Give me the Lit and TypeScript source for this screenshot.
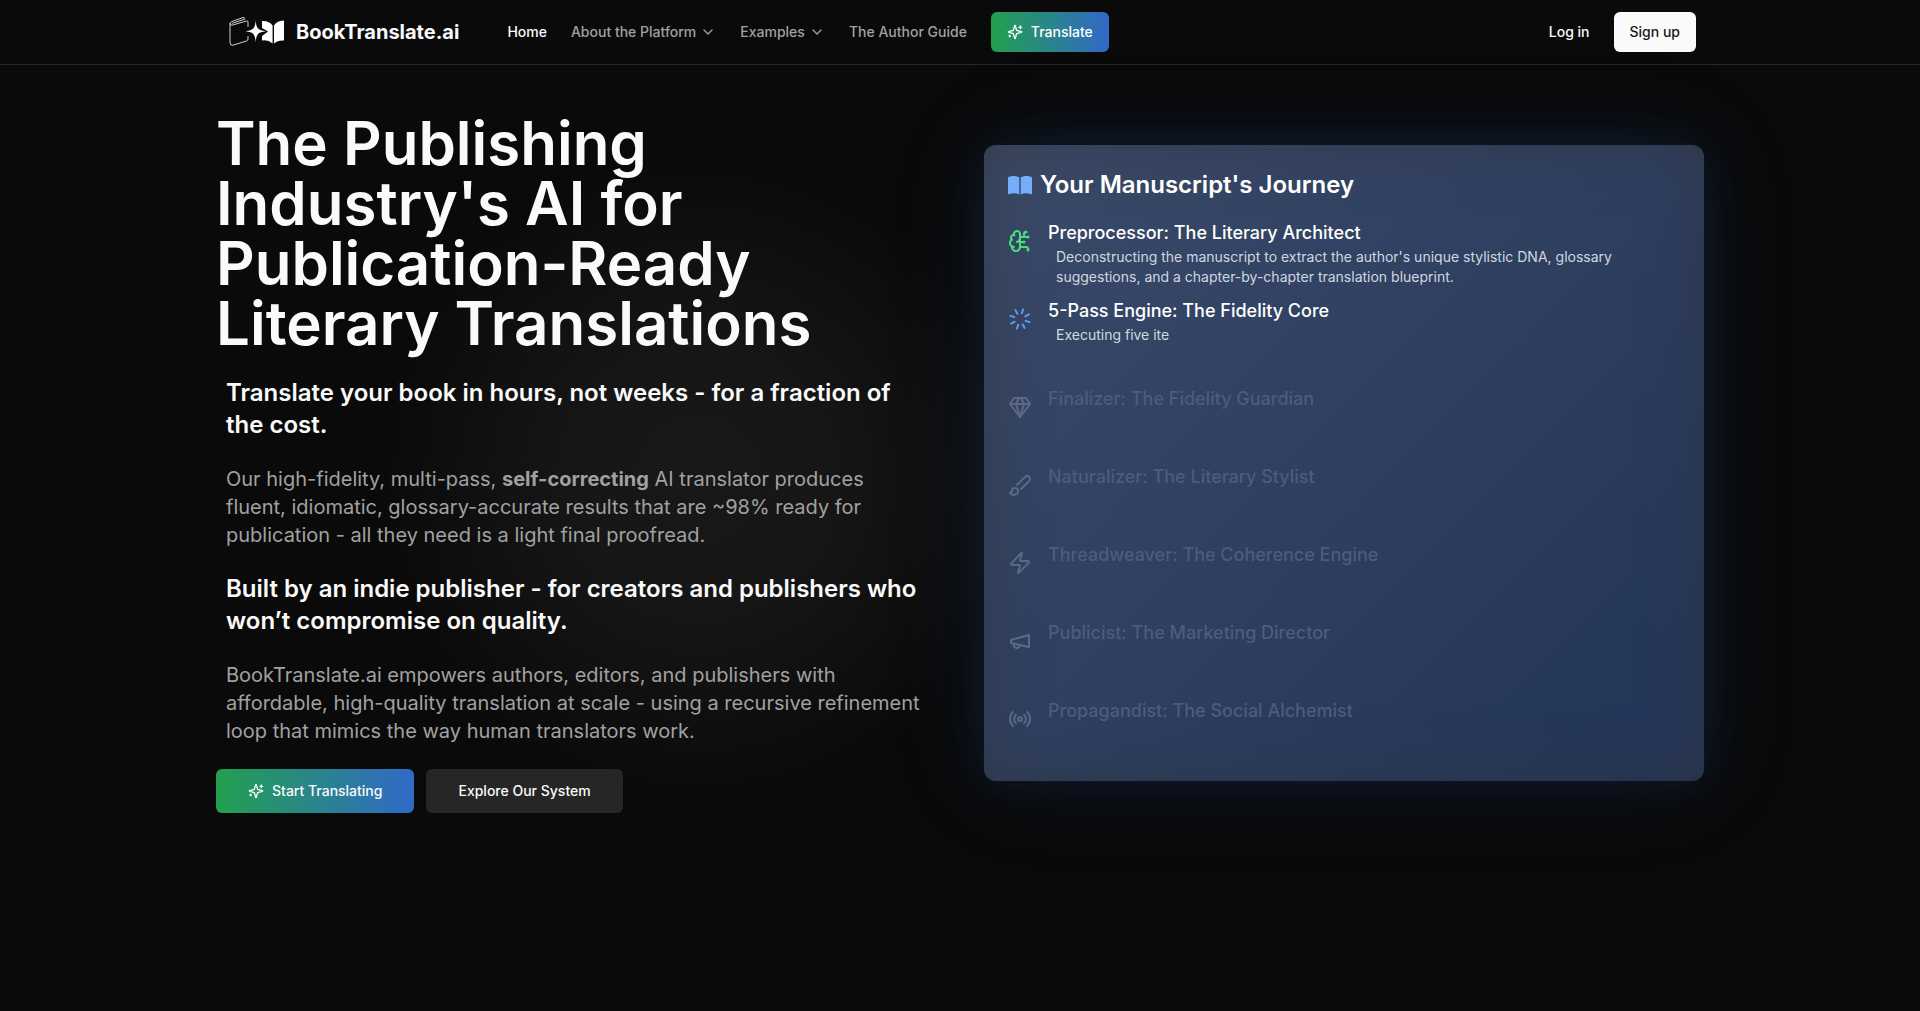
import { LitElement, html, css, svg, nothing } from "lit";
import { customElement, property } from "lit/decorators.js";
import { classMap } from "lit/directives/class-map.js";

const icons: Record<string, unknown> = {
  sparkles: svg`<path d="M9.937 15.5A2 2 0 0 0 8.5 14.063l-6.135-1.582a.5.5 0 0 1 0-.962L8.5 9.936A2 2 0 0 0 9.937 8.5l1.582-6.135a.5.5 0 0 1 .963 0L14.063 8.5A2 2 0 0 0 15.5 9.937l6.135 1.581a.5.5 0 0 1 0 .964L15.5 14.063a2 2 0 0 0-1.437 1.437l-1.582 6.135a.5.5 0 0 1-.963 0z"/><path d="M20 3v4M22 5h-4M4 17v2M5 18H3"/>`,
  chevron: svg`<path d="m6 9 6 6 6-6"/>`,
  brain: svg`<path d="M12 5a3 3 0 1 0-5.997.125 4 4 0 0 0-2.526 5.77 4 4 0 0 0 .556 6.588A4 4 0 1 0 12 18Z"/><path d="M9 13a4.5 4.5 0 0 0 3-4M6.003 5.125A3 3 0 0 0 6.401 6.5M3.477 10.896a4 4 0 0 1 .585-.396M6 18a4 4 0 0 1-1.967-.516M12 13h4M12 18h6a2 2 0 0 1 2 2v1M12 8h8M16 8V5a2 2 0 0 1 2-2"/><circle cx="16" cy="13" r=".5"/><circle cx="18" cy="3" r=".5"/><circle cx="20" cy="21" r=".5"/><circle cx="20" cy="8" r=".5"/>`,
  loader: svg`<g transform="rotate(18 12 12)"><path d="M12 2v4M12 18v4M2 12h4M18 12h4M4.93 4.93l2.83 2.83M16.24 16.24l2.83 2.83M4.93 19.07l2.83-2.83M16.24 7.76l2.83-2.83"/></g>`,
  gem: svg`<path d="M6 3h12l4 6-10 13L2 9Z"/><path d="M11 3 8 9l4 13 4-13-3-6"/><path d="M2 9h20"/>`,
  brush: svg`<path d="m9.06 11.9 8.07-8.06a2.85 2.85 0 1 1 4.03 4.03l-8.06 8.08"/><path d="M7.07 14.94c-1.66 0-3 1.35-3 3.02 0 1.33-2.5 1.52-2 2.02 1.08 1.1 2.49 2.02 4 2.02 2.2 0 4-1.8 4-4.04a3.01 3.01 0 0 0-3-3.02z"/>`,
  zap: svg`<path d="M4 14a1 1 0 0 1-.78-1.63l9.9-10.2a.5.5 0 0 1 .86.46l-1.92 6.02A1 1 0 0 0 13 10h7a1 1 0 0 1 .78 1.63l-9.9 10.2a.5.5 0 0 1-.86-.46l1.92-6.02A1 1 0 0 0 11 14z"/>`,
  megaphone: svg`<path d="m3 11 18-5v12L3 14v-3z"/><path d="M11.6 16.8a3 3 0 1 1-5.8-1.6"/>`,
  radio: svg`<path d="M4.9 19.1C1 15.2 1 8.8 4.9 4.9M7.8 16.2c-2.3-2.3-2.3-6.1 0-8.5M16.2 7.8c2.3 2.3 2.3 6.1 0 8.5M19.1 4.9C23 8.8 23 15.1 19.1 19"/><circle cx="12" cy="12" r="2"/>`,
};

@customElement("line-icon")
class LineIcon extends LitElement {
  @property() name = "";
  static styles = css`
    :host { display: block; flex: none; width: 16px; height: 16px; }
    svg { display: block; width: 100%; height: 100%; }
  `;
  render() {
    return html`<svg viewBox="0 0 24 24" fill="none" stroke="currentColor" stroke-width="2"
      stroke-linecap="round" stroke-linejoin="round" aria-hidden="true">${icons[this.name]}</svg>`;
  }
}

interface Step { icon: string; title: string; text?: string; state: "done" | "active" | "pending"; }

const steps: Step[] = [
  { icon: "brain", title: "Preprocessor: The Literary Architect", state: "done",
    text: "Deconstructing the manuscript to extract the author's unique stylistic DNA, glossary suggestions, and a chapter-by-chapter translation blueprint." },
  { icon: "loader", title: "5-Pass Engine: The Fidelity Core", state: "active", text: "Executing five ite" },
  { icon: "gem", title: "Finalizer: The Fidelity Guardian", state: "pending" },
  { icon: "brush", title: "Naturalizer: The Literary Stylist", state: "pending" },
  { icon: "zap", title: "Threadweaver: The Coherence Engine", state: "pending" },
  { icon: "megaphone", title: "Publicist: The Marketing Director", state: "pending" },
  { icon: "radio", title: "Propagandist: The Social Alchemist", state: "pending" },
];

@customElement("journey-card")
class JourneyCard extends LitElement {
  static styles = css`
    :host { display: block; }
    .card {
      padding: 24px; border-radius: 12px; color: #fff;
      background: linear-gradient(135deg, #3b4a69 0%, #2e3f60 50%, #223457 100%);
      box-shadow: 0 0 40px rgba(37, 78, 160, 0.16), 0 0 100px rgba(37, 78, 160, 0.16),
        inset 0 0 60px rgba(50, 54, 60, 0.65);
    }
    .title { display: flex; align-items: center; gap: 8px; margin: 0 0 20px; font-size: 24px; line-height: 32px; font-weight: 600; }
    .book { flex: none; width: 24px; height: 24px; fill: #74adfb; }
    .steps { display: flex; flex-direction: column; gap: 10px; margin: 0; padding: 0; list-style: none; }
    .step { display: flex; gap: 16px; min-height: 68px; }
    .active { min-height: 78px; }
    .step:last-child { min-height: 58px; }
    .glyph { width: 24px; height: 24px; margin-top: 8px; display: grid; place-items: center; flex: none; }
    .glyph line-icon { width: 24px; height: 24px; }
    .name { margin: 0; font-size: 18px; line-height: 24px; font-weight: 500; }
    .text { margin: 2px 0 0 8px; font-size: 14px; line-height: 20px; color: #d1d7e0; }
    .done .glyph { color: #4ade80; }
    .active .glyph { color: #5b9cf6; }
    .pending .glyph { color: #5b6985; }
    .pending .name { color: #4d5c7a; }
  `;
  render() {
    return html`<section class="card">
      <h2 class="title">
        <svg class="book" viewBox="0 0 24 24" aria-hidden="true"><path d="M11.3 4.5C9.7 3.5 7.9 3 6 3 4.200 3 2 3.300.600 4.100A1 1 0 0 0 0 5v15.500a.8.800 0 0 0 1.100.7C2.700 20.500 4.300 20.200 6 20.200c1.900 0 3.700.4 5.300 1.200zM12.700 4.500C14.300 3.500 16.100 3 18 3c1.800 0 4 .3 5.400 1.100.4.200.6.500.6.900v15.500a.8.800 0 0 1-1.100.7c-1.600-.7-3.200-1-4.900-1-1.900 0-3.700.4-5.300 1.200z"/></svg>
        Your Manuscript's Journey
      </h2>
      <ol class="steps">${steps.map((s) => html`
        <li class=${classMap({ step: true, [s.state]: true })}>
          <span class="glyph"><line-icon name=${s.icon}></line-icon></span>
          <div><h3 class="name">${s.title}</h3>${s.text ? html`<p class="text">${s.text}</p>` : nothing}</div>
        </li>`)}
      </ol>
    </section>`;
  }
}

@customElement("site-header")
class SiteHeader extends LitElement {
  static styles = css`
    :host { display: block; border-bottom: 1px solid #262626; }
    .bar { box-sizing: border-box; max-width: 1536px; margin: 0 auto; padding: 0 32px 0 36px; height: 64px; display: flex; align-items: center; font-size: 14px; line-height: 20px; font-weight: 500; }
    a { color: inherit; text-decoration: none; }
    .brand { display: flex; align-items: center; gap: 10px; margin-right: 48px; font-size: 20px; line-height: 28px; font-weight: 700; }
    .logo { width: 58px; height: 32px; }
    .nav { display: flex; align-items: center; gap: 24px; color: #a1a1a1; }
    .current { color: #fafafa; }
    button, .cta { font: inherit; border: 0; height: 40px; border-radius: 6px; display: flex; align-items: center; cursor: pointer; }
    .menu { gap: 4px; padding: 0; color: inherit; background: none; }
    .cta { box-sizing: border-box; gap: 8px; padding: 0 16px; color: #fff; background: linear-gradient(90deg, #22a04e, #3169c8); }
    .account { margin-left: auto; display: flex; align-items: center; gap: 24px; }
    .signup { padding: 0 16px; color: #171717; background: #fafafa; }
  `;
  render() {
    return html`<header class="bar">
      <a class="brand" href="#">
        <svg class="logo" viewBox="0 0 58 32" aria-hidden="true">
          <g fill="none" stroke="#e5e5e5" stroke-width="0.9" stroke-linejoin="round" stroke-linecap="round">
            <path d="M20 10.500V6Q20 4.600 18.500 5L4 9.200Q2 9.200 2 7.500V26.500Q2 29.800 5 29.200L18.500 25Q20 24.500 20 23V20.500"/>
            <path d="M2 7.500Q2 6.200 3.800 5.600L15 1.500Q16.400 1.200 16.600 2.300V3.200"/>
            <path d="M4.500 7.200L16 3.400"/>
          </g>
          <path fill="#fff" d="M34 9V5Q41 4.500 44.600 9.500V27.500Q40 23.500 34 24.500V20L40 15.500L34 12ZM46 9.500Q48.500 5 55.500 4.500Q56 4.500 56 5.500V24.500Q50 24 46 27.500Z"/>
          <path fill="#fff" stroke="#0a0a0a" stroke-width="1" paint-order="stroke" d="M27.700 4.300C28.300 12 29.500 14.300 38 15.300C29.500 16.300 28.300 18.500 27.700 26.500C27.100 18.500 25.900 16.300 17.500 15.300C25.900 14.300 27.100 12 27.700 4.300Z"/>
        </svg>
        BookTranslate.ai
      </a>
      <nav class="nav" aria-label="Main">
        <a class="current" href="#">Home</a>
        <button class="menu" type="button">About the Platform <line-icon name="chevron"></line-icon></button>
        <button class="menu" type="button">Examples <line-icon name="chevron"></line-icon></button>
        <a href="#">The Author Guide</a>
        <a class="cta" href="#"><line-icon name="sparkles"></line-icon>Translate</a>
      </nav>
      <div class="account">
        <a href="#">Log in</a>
        <button class="signup" type="button">Sign up</button>
      </div>
    </header>`;
  }
}

@customElement("app-root")
class AppRoot extends LitElement {
  static styles = css`
    :host { display: block; min-height: 100vh; overflow-x: hidden; color: #fafafa; background: #0a0a0a; font-family: Inter, "Liberation Sans", sans-serif; }
    .hero {
      box-sizing: border-box; max-width: 1536px; margin: 0 auto; padding: 48px 24px;
      display: grid; grid-template-columns: minmax(0, 1fr) minmax(0, 1fr); gap: 48px; align-items: center;
      background: radial-gradient(circle 320px at 33% 52%, #181818 0%, #161616 40%, #0a0a0a 100%);
    }
    h1 { margin: 0; font-size: 60px; line-height: 60px; font-weight: 600; }
    .copy { display: flex; flex-direction: column; gap: 24px; margin: 24px 0; padding: 0 10px; }
    h2, p { margin: 0; }
    h2 { font-size: 24px; line-height: 32px; font-weight: 600; }
    p { font-size: 20px; line-height: 28px; color: #a1a1a1; }
    .actions { display: flex; gap: 12px; }
    .action { box-sizing: border-box; height: 44px; padding: 0 32px; border-radius: 6px; display: flex; align-items: center; gap: 8px; font-size: 14px; line-height: 20px; font-weight: 500; color: #fafafa; text-decoration: none; background: #262626; }
    .primary { background: linear-gradient(90deg, #22a04e, #3169c8); }
  `;
  render() {
    return html`
      <site-header></site-header>
      <main class="hero">
        <section>
          <h1>The Publishing Industry's AI for Publication-Ready Literary Translations</h1>
          <div class="copy">
            <h2>Translate your book in hours, not weeks - for a fraction of the cost.</h2>
            <p>Our high-fidelity, multi-pass, <strong>self-correcting</strong> AI translator produces fluent, idiomatic, glossary-accurate results that are ~98% ready for publication - all they need is a light final proofread.</p>
            <h2>Built by an indie publisher - for creators and publishers who won’t compromise on quality.</h2>
            <p>BookTranslate.ai empowers authors, editors, and publishers with affordable, high-quality translation at scale - using a recursive refinement loop that mimics the way human translators work.</p>
          </div>
          <div class="actions">
            <a class="action primary" href="#"><line-icon name="sparkles"></line-icon>Start Translating</a>
            <a class="action" href="#">Explore Our System</a>
          </div>
        </section>
        <journey-card></journey-card>
      </main>`;
  }
}
